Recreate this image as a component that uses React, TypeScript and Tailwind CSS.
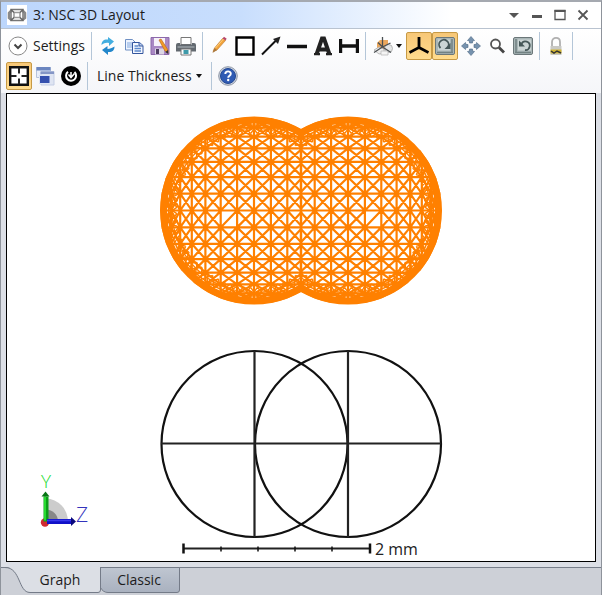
import { useState, type ReactNode } from "react"

const SPHERE_RADIUS = 93
const MESH_ANGLE = (10.5 * Math.PI) / 180
const MESH_Y = 211
const LEFT_X = 254
const RIGHT_X = 348
const SEAM_X = 301

// Triangulated sphere seen from the front: crossed cells whose size shrinks
// towards the rim. `hole` is the column of the one cell that misses a diagonal.
function sphereMesh(cx: number, hole: number) {
  const at = (n: number) => SPHERE_RADIUS * Math.sin(MESH_ANGLE * n)
  // nodes outside the sphere are pulled back onto its rim
  const node = (i: number, j: number) => {
    const x = at(i)
    const y = at(j)
    const k = Math.min(1, SPHERE_RADIUS / Math.max(1, Math.hypot(x, y)))
    return `${(cx + x * k).toFixed(1)} ${(MESH_Y + y * k).toFixed(1)}`
  }
  let path = ""
  const line = (i1: number, j1: number, i2: number, j2: number) => {
    const inside = Math.hypot((at(i1) + at(i2)) / 2, (at(j1) + at(j2)) / 2) < SPHERE_RADIUS + 3
    if (inside) path += `M${node(i1, j1)}L${node(i2, j2)}`
  }
  for (let i = -8; i < 8; i++) {
    for (let j = -8; j < 8; j++) {
      line(i, j, i + 1, j)
      line(i, j, i, j + 1)
      line(i + 1, j, i, j + 1)
      if (i !== hole || j !== 0) line(i, j, i + 1, j + 1)
    }
  }
  return path
}

// Narrow triangles that fill the rim
function rimMesh(cx: number) {
  const count = 72
  let path = ""
  for (let n = 0; n < count; n++) {
    const start = (n * 2 * Math.PI) / count
    for (const turn of [-1.5, 1.5]) {
      const end = start + (turn * 2 * Math.PI) / count
      path += `M${(cx + 93 * Math.cos(start)).toFixed(1)} ${(MESH_Y + 93 * Math.sin(start)).toFixed(1)}`
      path += `L${(cx + 77 * Math.cos(end)).toFixed(1)} ${(MESH_Y + 77 * Math.sin(end)).toFixed(1)}`
    }
  }
  return path
}

function SphereMesh({ cx, hole }: { cx: number; hole: number }) {
  return (
    <>
      <path d={sphereMesh(cx, hole)} strokeWidth="2.200" />
      <path d={rimMesh(cx)} strokeWidth="1.400" />
      <circle cx={cx} cy={MESH_Y} r="82" strokeWidth="1.200" />
      <circle cx={cx} cy={MESH_Y} r="85.500" strokeWidth="1.500" />
      <circle cx={cx} cy={MESH_Y} r="90.500" strokeWidth="7" />
    </>
  )
}

function Icon({ children }: { children: ReactNode }) {
  return (
    <svg viewBox="0 0 20 20" className="h-5 w-5 shrink-0" fill="none" aria-hidden="true">
      {children}
    </svg>
  )
}

function ToolButton({ label, active, children }: { label: string; active?: boolean; children: ReactNode }) {
  const [on, setOn] = useState(!!active)
  return (
    <button
      type="button"
      aria-label={label}
      aria-pressed={active === undefined ? undefined : on}
      onClick={() => active !== undefined && setOn(!on)}
      className={
        on
          ? "flex h-7 w-[26px] items-center justify-center rounded-xs border border-[#c79a45] bg-linear-to-b from-[#f7c777] to-[#ffdc8e]"
          : "flex h-7 w-[26px] items-center justify-center"
      }
    >
      <Icon>{children}</Icon>
    </button>
  )
}

function Separator() {
  return <div className="mx-[3px] h-7 w-px bg-[#b4c6d8]" />
}

function Caret() {
  return (
    <svg viewBox="0 0 6 4" className="h-1 w-1.5 shrink-0" aria-hidden="true">
      <path d="M0 0h6L3 4z" fill="#111" />
    </svg>
  )
}

function TitleBar() {
  return (
    <header className="flex h-[27px] items-center gap-1.5 border-b border-[#b9c3d0] bg-linear-to-r from-[#bcd6fc] via-[#c8defd] via-40% to-white to-75% pr-[7px] pl-1.5">
      <span className="flex h-5 w-5 items-center justify-center bg-white">
        <svg viewBox="0 0 20 20" className="h-5 w-5" fill="none" aria-hidden="true">
          <path d="M4.500 5.500 2 8v5l2.500 2M15.500 5.500 18 8v5l-2.500 2" stroke="#8a8a8a" strokeWidth="2.500" />
          <path d="M4 4.500h12v11H4z" stroke="#777" strokeWidth="1.500" />
          <path d="M7 7.500h6v5H7z" stroke="#999" strokeWidth="1.500" />
          <path d="m4 4.500 3 3m6 0 3-3m-12 11 3-3m6 0 3 3" stroke="#666" strokeWidth="1.500" />
        </svg>
      </span>
      <h1 className="flex-1 text-sm leading-5">3: NSC 3D Layout</h1>
      <div className="flex">
        <button type="button" aria-label="Window menu" className="flex h-5 w-[23px] items-center justify-center">
          <svg viewBox="0 0 12 12" className="h-3 w-3" aria-hidden="true"><path d="M1 4h10L6 9z" fill="#555" /></svg>
        </button>
        <button type="button" aria-label="Minimize" className="flex h-5 w-[23px] items-center justify-center">
          <svg viewBox="0 0 12 12" className="h-3 w-3" aria-hidden="true"><path d="M1 6h10v3H1z" fill="#555" /></svg>
        </button>
        <button type="button" aria-label="Maximize" className="flex h-5 w-[23px] items-center justify-center">
          <svg viewBox="0 0 12 12" className="h-3 w-3" aria-hidden="true">
            <path d="M1 1.500h10v9H1z" fill="none" stroke="#555" strokeWidth="1.300" />
            <path d="M.5 1h11v2H.5z" fill="#555" />
          </svg>
        </button>
        <button type="button" aria-label="Close" className="flex h-5 w-[23px] items-center justify-center">
          <svg viewBox="0 0 12 12" className="h-3 w-3" aria-hidden="true">
            <path d="m1.500 1.500 9 9m0-9-9 9" stroke="#555" strokeWidth="1.800" />
          </svg>
        </button>
      </div>
    </header>
  )
}

function Toolbar() {
  return (
    <nav aria-label="Plot tools" className="flex flex-col gap-0.5 bg-linear-to-b from-white to-[#f5f6f9] px-[5px] pt-[3px] pb-[3px]">
      <div className="flex flex-wrap items-center">
        <button type="button" className="mr-[3px] flex h-7 items-center gap-[5px] pl-[2px] text-sm leading-5">
          <Icon>
            <circle cx="10" cy="10" r="9" fill="#fff" stroke="#888" />
            <path d="m6.500 8.500 3.500 3.500 3.500-3.500" stroke="#444" strokeWidth="2" />
          </Icon>
          Settings
        </button>
        <Separator />
        <ToolButton label="Update">
          <path d="M3.500 9c0-4 2.500-6 6.500-5.500V1l6 4.500-5 4.500V7C8 6.500 6 7 3.500 9z" fill="#43aee0" />
          <path d="M16.500 10.500c0 4-2.500 6-6.500 5.500V19l-6-5 5.500-4v3c2.500 0 4.500-1 7-2.500z" fill="#2387cb" />
        </ToolButton>
        <ToolButton label="Copy">
          <path d="M1.500 3.500h7l2.500 2.500v8H1.500z" fill="#eef4ff" stroke="#6f90c4" />
          <path d="M3 7h5M3 9h5M3 11h5" stroke="#82a8de" />
          <path d="M8.500 6.500h7L19 9.500v8H8.500z" fill="#f4f8ff" stroke="#34569e" />
          <path d="M15 6.500v3.500h4" fill="#b8cdf0" stroke="#34569e" />
          <path d="M10.500 10h4M10.500 12.500h6.500M10.500 15h6.500" stroke="#5c88cc" strokeWidth="1.400" />
        </ToolButton>
        <ToolButton label="Save">
          <path d="M1 1.500h18v17H1z" fill="#a988c4" stroke="#8c69ab" />
          <path d="M4 2h11v8H4z" fill="#f6f1fa" />
          <path d="M5 12.500h9v6H5z" fill="#dcd6e4" />
          <path d="M6 13h3v5H6z" fill="#4e3d62" />
          <path d="m9 4 2-1 7 11v3l-3-2z" fill="#f39a27" stroke="#b96e25" strokeWidth=".700" />
          <path d="m18 14 .3 4-3-2z" fill="#333" />
        </ToolButton>
        <ToolButton label="Print">
          <path d="M5 1.500h10v7H5z" fill="#fff" stroke="#777" />
          <path d="M0 9q0-2 2-2h2v1.500h12V7h2q2 0 2 2v6.500H0z" fill="#626970" />
          <path d="M1.500 10h17v2h-17z" fill="#8b9298" />
          <path d="M5 13h10v6H5z" fill="#fff" stroke="#777" />
          <path d="M7.500 14h5v4h-5z" fill="#3e9aaa" />
        </ToolButton>
        <Separator />
        <ToolButton label="Pencil">
          <path d="M4 15.500 5.500 12 13.500 2.500l3 2L8 14z" fill="#f2a33b" stroke="#b97a34" strokeWidth=".600" />
          <path d="m13.500 2.500 1.500-1.800 2.700 2L16.500 4.500z" fill="#b9476a" />
          <path d="M3.500 17 5.500 12 8 14z" fill="#a9773c" />
          <path d="m6.500 12 8-9" stroke="#ffd07a" />
        </ToolButton>
        <ToolButton label="Rectangle"><path d="M1.500 1.500h17v17h-17z" fill="#fff" stroke="#000" strokeWidth="2.400" /></ToolButton>
        <ToolButton label="Arrow">
          <path d="M1 18.500 15 4.500" stroke="#111" strokeWidth="2" />
          <path d="m19.500.5-2.500 7.500-5-5z" fill="#222" />
        </ToolButton>
        <ToolButton label="Line"><path d="M0 10.500h20" stroke="#111" strokeWidth="3.500" /></ToolButton>
        <ToolButton label="Text">
          <path d="m3.500 18.500 5.500-16h2l5.500 16M5.500 13.500h9" stroke="#222" strokeWidth="4" />
          <path d="M1 17h6v2.200H1zm12 0h6v2.200h-6z" fill="#222" />
        </ToolButton>
        <ToolButton label="Dimension"><path d="M1.500 3v14M18.500 3v14M2 10h16" stroke="#111" strokeWidth="3.400" /></ToolButton>
        <Separator />
        <button type="button" aria-label="Camera views" className="flex h-7 w-[37px] items-center justify-center gap-[3px]">
          <Icon>
            <path d="M4 7 7 4h8v8l-5 2-6-2z" fill="#eba75c" />
            <path d="m1 14 5-3 5 2v4l-5 1z" fill="#eee" stroke="#aaa" strokeWidth=".800" />
            <ellipse cx="15.500" cy="12.500" rx="4" ry="4" fill="#e4e6e6" stroke="#aaa" strokeWidth=".800" />
            <path d="M8 15h7v4H8z" fill="#f4f4f4" stroke="#bbb" strokeWidth=".800" />
            <path d="M9.500 1v10L1 16.500M9.500 11l8.500 5.500M9.500 11 5 6.500M9.500 11l8-4" stroke="#4a4f52" strokeWidth="1.300" />
          </Icon>
          <Caret />
        </button>
        <ToolButton label="Orientation axes" active>
          <path d="M10 1v10.500L.5 16.500M10 11.500l9.500 5" stroke="#000" strokeWidth="2.800" />
        </ToolButton>
        <ToolButton label="Rotate" active>
          <rect x=".500" y="1.500" width="19" height="17" rx="1.500" fill="#a9b6b7" stroke="#6b7779" />
          <path d="M3 3.500h12v11H3z" fill="#cbd5d5" />
          <path d="M5.500 12A4.800 4.800 0 1 1 13 11" stroke="#465859" strokeWidth="1.800" />
          <path d="M15.500 7v6h-6z" fill="#465859" />
          <path d="M2 16.500h16M17 3v14" stroke="#718182" strokeWidth="1.500" />
        </ToolButton>
        <ToolButton label="Pan">
          <path d="m10 .5 3.500 4-2 .5v2h-3V5l-2-.5zM10 19.500l3.500-4-2-.5v-2h-3v2l-2 .5zM.5 10l4-3.500.5 2h2v3H5l-.5 2zM19.500 10l-4-3.500-.5 2h-2v3h2l.5 2z" fill="#7692ae" stroke="#4f6985" strokeWidth=".600" />
        </ToolButton>
        <ToolButton label="Zoom">
          <circle cx="8.500" cy="8" r="4.500" fill="#fff" stroke="#555" strokeWidth="1.800" />
          <path d="m12 11.500 5 5" stroke="#444" strokeWidth="2.800" />
        </ToolButton>
        <ToolButton label="Reset view">
          <rect x=".500" y="1.500" width="19" height="17" rx="1.500" fill="#a9b6b7" stroke="#6b7779" />
          <path d="M5 3.500h13v11H5z" fill="#cbd5d5" />
          <path d="M8.500 8A4.300 4.300 0 1 1 12 14" stroke="#465859" strokeWidth="1.800" />
          <path d="M6 4.500v6h6z" fill="#465859" />
          <path d="M3 3v14M2 16.500h16" stroke="#718182" strokeWidth="1.500" />
        </ToolButton>
        <Separator />
        <ToolButton label="Lock">
          <path d="M6 11V6c0-5.500 8-5.500 8 0v5" stroke="#b0b0b0" strokeWidth="1.800" />
          <path d="M4.500 10h11v9h-11z" fill="#c8c8c4" />
          <path d="M4.500 13.500h11v4h-11z" fill="#d2b634" />
          <path d="m5 15 3 2 3-2 4 2" stroke="#333" strokeWidth="1.500" />
        </ToolButton>
        <Separator />
      </div>
      <div className="flex flex-wrap items-center">
        <ToolButton label="Fit window" active>
          <path d="M1.200 1.200h17.600v17.600H1.200z" fill="#fff" stroke="#111" strokeWidth="2.400" />
          <path d="M10 2v5.500M10 12.500V18M2 10h5.500M12.500 10H18" stroke="#222" strokeWidth="2" />
        </ToolButton>
        <ToolButton label="Clone window">
          <path d="M1.500 1.500h14v10h-14z" fill="#e8eefb" stroke="#b6c3de" />
          <path d="M1.500 1h14v3.500h-14z" fill="#6b86c0" />
          <path d="M6 5.500h13v13.500H6z" fill="#dfe5f2" stroke="#c3cde4" />
          <path d="M5.500 5.500h13.500v2.500H5.500z" fill="#8496c6" />
          <path d="M4.500 9.500h10.500v8H4.500z" fill="#3550ae" stroke="#dfe6f6" />
        </ToolButton>
        <ToolButton label="Animate">
          <circle cx="10" cy="10" r="10" fill="#000" />
          <path d="M7 5.800a5 5 0 1 0 6.500.3" stroke="#fff" strokeWidth="2" />
          <path d="M10 6v5M7.500 8.500l2.500 3 3.500-4" stroke="#fff" strokeWidth="1.500" />
        </ToolButton>
        <Separator />
        <button type="button" className="flex h-7 items-center gap-1 px-1.5 text-sm leading-5">
          Line Thickness
          <Caret />
        </button>
        <Separator />
        <ToolButton label="Help">
          <circle cx="10" cy="10" r="9.300" fill="#cfd5df" stroke="#8c95a5" />
          <circle cx="10" cy="10" r="7.500" fill="#2f5bb4" stroke="#234893" />
          <path d="M7.300 8c0-3.500 5.500-3.500 5.500-.3 0 2-2.600 2-2.600 4" stroke="#fff" strokeWidth="1.900" />
          <circle cx="10.200" cy="14" r="1.200" fill="#fff" />
        </ToolButton>
      </div>
    </nav>
  )
}

function LayoutPlot() {
  return (
    <svg viewBox="7 95 588 466" className="h-full w-full" role="img" aria-label="3D layout of two overlapping spheres">
      <defs>
        <clipPath id="left-half"><path d="M7 95h294v466H7z" /></clipPath>
        <clipPath id="right-half"><path d="M301 95h294v466H301z" /></clipPath>
      </defs>
      <g fill="none" stroke="#ff8000">
        <g clipPath="url(#left-half)">
          <SphereMesh cx={LEFT_X} hole={-2} />
        </g>
        <g clipPath="url(#right-half)">
          <SphereMesh cx={RIGHT_X} hole={1} />
        </g>
        <path d={`M${SEAM_X} 130v162`} strokeWidth="2.500" />
      </g>

      <g fill="none" stroke="#111" strokeWidth="2.200">
        <circle cx="254.500" cy="444.500" r="93" />
        <circle cx="348" cy="444.500" r="93" />
        <path d="M161 444h280M254.500 351v187M348 351v187" stroke="#222" />
      </g>

      {/* scale bar */}
      <path d="M183 549h187" stroke="#222" strokeWidth="2" />
      <path d="M183.500 544v10M370 544v10" stroke="#111" strokeWidth="2.500" />
      <path d="M221 547v5M258 547v5M295 547v5M332 547v5" stroke="#111" strokeWidth="1.500" />
      <text x="375" y="555" fontSize="16" fill="#222" className="font-['Open_Sans',sans-serif]">2 mm</text>

      {/* axis triad */}
      <path d="M46 522v-23a23 23 0 0 1 22 23z" fill="#ccc" />
      <path d="M46 522v-12a12 12 0 0 1 12 12z" fill="#888" />
      <circle cx="45" cy="523" r="4.200" fill="#d12a32" />
      <path d="M46 522V497" stroke="#0b9d18" strokeWidth="5" />
      <path d="M45 521V497" stroke="#27db30" strokeWidth="2" />
      <path d="m45.500 492 4 5h-8z" fill="#087515" />
      <path d="M47 522h24" stroke="#1010c8" strokeWidth="5" />
      <path d="M47 521h24" stroke="#3939ed" strokeWidth="1.500" />
      <path d="m76 522-5-4.500v9z" fill="#09097d" />
      <text x="41" y="488" fontSize="19" fill="#28dc35" className="font-['Open_Sans',sans-serif] font-light">Y</text>
      <text x="76" y="522" fontSize="21" fill="#3333bc" className="font-['Open_Sans',sans-serif] font-light">Z</text>
    </svg>
  )
}

function ViewTabs({ tab, onSelect }: { tab: string; onSelect: (tab: string) => void }) {
  return (
    <div role="tablist" className="relative isolate mt-[5px] flex h-7 items-start border-t border-[#777e8a] bg-[#cdd0d7]">
      <svg viewBox="0 0 180 27" className="absolute -top-px left-0 -z-10 h-[27px] w-[180px]" fill="none" aria-hidden="true">
        <defs>
          <linearGradient id="tab-idle" x2="0" y2="1">
            <stop stopColor="#bfc6d1" />
            <stop offset="1" stopColor="#a9b1bf" />
          </linearGradient>
        </defs>
        <path d="M99.500.5h79V23q0 2.500-2.500 2.500h-69q-5 0-7.500-5z" fill="url(#tab-idle)" stroke="#747b88" />
        <path d="M4 0h95v25H29C17 25 20 0 4 0z" fill="#dcdfe5" />
        <path d="M4 .5c16 0 13 25 25 25h68q2.500 0 2.500-2.500V.5" stroke="#747b88" />
      </svg>
      <button type="button" role="tab" aria-selected={tab === "graph"} onClick={() => onSelect("graph")} className="h-6 w-[98px] pl-5 text-sm leading-5">
        Graph
      </button>
      <button type="button" role="tab" aria-selected={tab === "classic"} onClick={() => onSelect("classic")} className="h-6 w-20 text-sm leading-5">
        Classic
      </button>
    </div>
  )
}

export default function App() {
  const [tab, setTab] = useState("graph")

  return (
    <div className="flex h-screen flex-col border-x border-t-2 border-x-[#8e939b] border-t-[#a5a9b0] bg-[#dcdfe6] font-['Open_Sans','Noto_Sans',sans-serif] text-[#1c1c1c]">
      <TitleBar />
      <Toolbar />
      <main className="mx-[5px] min-h-0 flex-1 border border-black bg-white">
        <LayoutPlot />
      </main>
      <ViewTabs tab={tab} onSelect={setTab} />
    </div>
  )
}
